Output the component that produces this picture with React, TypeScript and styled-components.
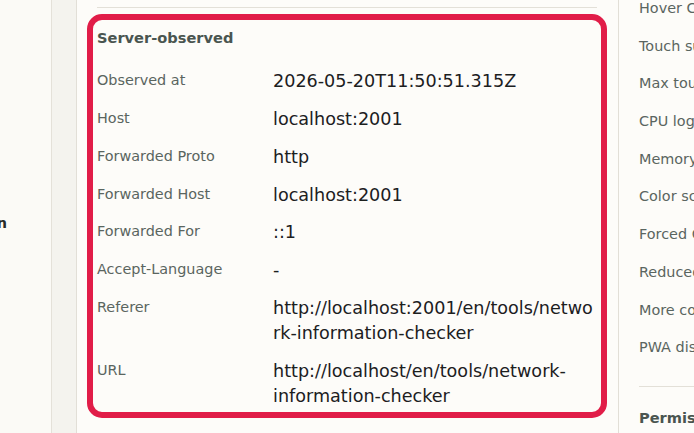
import React from "react";
import styled, { createGlobalStyle } from "styled-components";

const GlobalStyle = createGlobalStyle`
  html, body {
    margin: 0;
    padding: 0;
    background: #fdfcf9;
    overflow: hidden;
  }
  body {
    font-family: "DejaVu Sans", "Noto Sans", sans-serif;
  }
`;

const serverRows: { label: string; value: string }[] = [
  { label: "Observed at", value: "2026-05-20T11:50:51.315Z" },
  { label: "Host", value: "localhost:2001" },
  { label: "Forwarded Proto", value: "http" },
  { label: "Forwarded Host", value: "localhost:2001" },
  { label: "Forwarded For", value: "::1" },
  { label: "Accept-Language", value: "-" },
  { label: "Referer", value: "http://localhost:2001/en/tools/network-information-checker" },
  { label: "URL", value: "http://localhost/en/tools/network-information-checker" },
];

const deviceRows: { label: string; value: string }[] = [
  { label: "Hover Capability", value: "hover" },
  { label: "Touch support", value: "No" },
  { label: "Max touch points", value: "0" },
  { label: "CPU logical cores", value: "8" },
  { label: "Memory (GB)", value: "8" },
  { label: "Color scheme", value: "light" },
  { label: "Forced Colors", value: "none" },
  { label: "Reduced motion", value: "no-preference" },
  { label: "More contrast", value: "no-preference" },
  { label: "PWA display mode", value: "browser" },
];

const App = () => {
  return (
    <>
      <GlobalStyle />
      <Page>
        <Sidebar>
          <NavItem>
            <NavText>Network information</NavText>
          </NavItem>
        </Sidebar>
        <Gutter />
        <Main>
          <PrevSection />
          <HighlightCard>
            <CardTitle>Server-observed</CardTitle>
            <InfoList>
              {serverRows.map((row) => (
                <React.Fragment key={row.label}>
                  <Label>{row.label}</Label>
                  <Value>{row.value}</Value>
                </React.Fragment>
              ))}
            </InfoList>
          </HighlightCard>
        </Main>
        <Aside>
          <AsideList>
            {deviceRows.map((row) => (
              <React.Fragment key={row.label}>
                <Label>{row.label}</Label>
                <Value>{row.value}</Value>
              </React.Fragment>
            ))}
          </AsideList>
          <Divider />
          <SectionTitle>Permissions</SectionTitle>
        </Aside>
      </Page>
    </>
  );
};

const Page = styled.div`
  display: grid;
  grid-template-columns: 52px 25px 541px 440px;
  height: 433px;
  overflow: hidden;
`;

const Sidebar = styled.div`
  background: #fbfaf6;
  border-right: 1px solid #e4e1d9;
  padding-top: 213px;
  overflow: hidden;
`;

const NavItem = styled.div`
  display: flex;
  justify-content: flex-end;
  width: 7px;
`;

const NavText = styled.span`
  flex: none;
  white-space: nowrap;
  font-weight: 700;
  font-size: 14.4px;
  line-height: 20px;
  color: #262b28;
`;

const Gutter = styled.div`
  background: #f4f3ee;
  border-right: 1px solid #e2dfd7;
`;

const Main = styled.main`
  background: #fdfcf9;
  padding: 0 21px 0 20px;
`;

const PrevSection = styled.div`
  height: 7px;
  border-bottom: 1px solid #e3e0d8;
`;

const HighlightCard = styled.section`
  margin: 6px -10px 0;
  padding: 8px 4px 3px;
  border: 6px solid #e11d48;
  border-radius: 15px;
`;

const CardTitle = styled.h3`
  margin: 0;
  font-size: 14.6px;
  line-height: 20px;
  font-weight: 700;
  color: #4a5550;
`;

const InfoList = styled.dl`
  display: grid;
  grid-template-columns: 176px 1fr;
  row-gap: 12.8px;
  align-items: start;
  margin: 21.2px 0 0;
`;

const Label = styled.dt`
  margin: 0;
  padding-top: 1px;
  font-size: 14.4px;
  line-height: 20px;
  color: #5a6560;
  white-space: nowrap;
`;

const Value = styled.dd`
  margin: 0;
  font-size: 17.6px;
  line-height: 25px;
  color: #1c201e;
  overflow-wrap: anywhere;
`;

const Aside = styled.aside`
  border-left: 1px solid #e2dfd7;
  padding: 0 20px;
  background: #fdfcf9;
`;

const AsideList = styled.dl`
  display: grid;
  grid-template-columns: 176px 1fr;
  row-gap: 12.7px;
  align-items: start;
  margin: -3px 0 0;
`;

const Divider = styled.hr`
  margin: 24.4px 0 0;
  border: none;
  border-top: 1px solid #e3e0d8;
`;

const SectionTitle = styled.h3`
  margin: 21.5px 0 0;
  font-size: 14.6px;
  line-height: 20px;
  font-weight: 700;
  color: #4a5550;
`;

export default App;
